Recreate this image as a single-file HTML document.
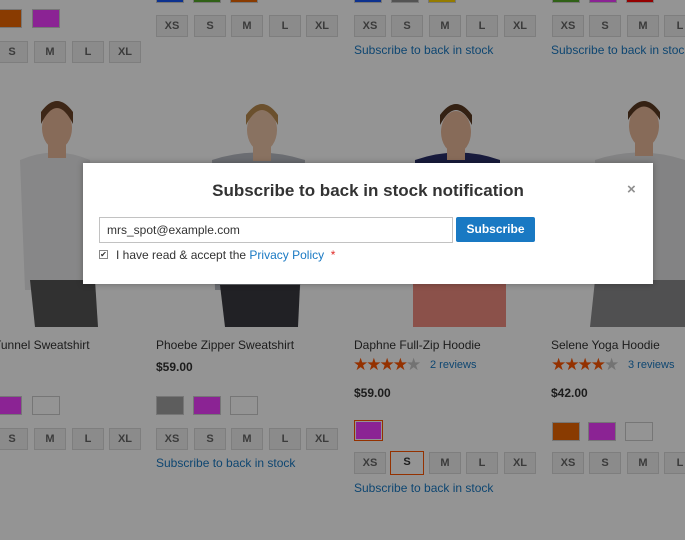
<!DOCTYPE html>
<html><head><meta charset="utf-8"><style>
*{box-sizing:border-box;margin:0;padding:0}
body{width:685px;height:540px;overflow:hidden;position:relative;background:#fff;font-family:"Liberation Sans",sans-serif;color:#333}
.a{position:absolute}
.sw{position:absolute;width:28px;height:19px;border:1px solid #ccc}
.sz{position:absolute;width:32px;height:22px;border:1px solid #dadada;background:#f0f0f0;color:#666;font-size:11px;font-weight:bold;text-align:center;line-height:20px}
.lnk{position:absolute;color:#1979c3;font-size:12px}
.nm{position:absolute;font-size:12px;color:#333}
.pr{position:absolute;font-size:12px;font-weight:bold;color:#333}
.st{position:absolute;font-size:17px;color:#ff5501;letter-spacing:-2px}
.st span{color:#c7c7c7}
.ov{position:absolute;left:0;top:0;width:685px;height:540px;background:rgba(0,0,0,0.42)}
</style></head><body>
<div class="sw" style="left:-6px;top:9px;background:#ec6602"></div>
<div class="sw" style="left:32px;top:9px;background:#ef3dff"></div>
<div class="sz" style="left:-4px;top:41px">S</div>
<div class="sz" style="left:34px;top:41px">M</div>
<div class="sz" style="left:72px;top:41px">L</div>
<div class="sz" style="left:109px;top:41px">XL</div>
<div class="sw" style="left:156px;top:-16px;background:#1857f7"></div>
<div class="sw" style="left:193px;top:-16px;background:#53a828"></div>
<div class="sw" style="left:230px;top:-16px;background:#ec6602"></div>
<div class="sw" style="left:354px;top:-16px;background:#1857f7"></div>
<div class="sw" style="left:391px;top:-16px;background:#8f8f8f"></div>
<div class="sw" style="left:428px;top:-16px;background:#ffd500"></div>
<div class="sw" style="left:552px;top:-16px;background:#53a828"></div>
<div class="sw" style="left:589px;top:-16px;background:#ef3dff"></div>
<div class="sw" style="left:626px;top:-16px;background:#ff0000"></div>
<div class="sz" style="left:156px;top:15px">XS</div><div class="sz" style="left:194px;top:15px">S</div><div class="sz" style="left:231px;top:15px">M</div><div class="sz" style="left:269px;top:15px">L</div><div class="sz" style="left:306px;top:15px">XL</div>
<div class="sz" style="left:354px;top:15px">XS</div><div class="sz" style="left:391px;top:15px">S</div><div class="sz" style="left:429px;top:15px">M</div><div class="sz" style="left:466px;top:15px">L</div><div class="sz" style="left:504px;top:15px">XL</div>
<div class="sz" style="left:552px;top:15px">XS</div><div class="sz" style="left:589px;top:15px">S</div><div class="sz" style="left:627px;top:15px">M</div><div class="sz" style="left:664px;top:15px">L</div>
<div class="lnk" style="left:354px;top:43px">Subscribe to back in stock</div>
<div class="lnk" style="left:551px;top:43px;white-space:nowrap">Subscribe to back in stock</div>

<svg class="a" style="left:0;top:90px" width="685" height="240">
<g>
<path d="M20 70 Q55 55 90 70 L95 200 L25 200 Z" fill="#e8e8ea"/><path d="M30 190 L95 190 L98 237 L35 237 Z" fill="#555"/>
<rect x="48" y="52" width="18" height="16" fill="#e8b89a"/>
<ellipse cx="57" cy="38" rx="15" ry="21" fill="#e8b89a"/><path d="M41 34 Q57 2 73 34 L73 22 Q57 0 41 22Z" fill="#6b4428"/>
</g>
<g>
<path d="M212 70 Q258 55 305 70 L300 200 L215 200 Z" fill="#b8bcc4"/><path d="M220 195 L300 195 L298 237 L225 237 Z" fill="#3a3a40"/>
<rect x="253" y="55" width="18" height="16" fill="#edc5a8"/>
<ellipse cx="262" cy="40" rx="15" ry="21" fill="#edc5a8"/><path d="M246 35 Q262 5 278 35 L278 25 Q262 3 246 25Z" fill="#b88a4e"/>
</g>
<g>
<path d="M415 70 Q458 55 500 70 L500 195 L415 195 Z" fill="#2a2f6a"/><path d="M413 190 L506 190 L506 237 L413 237 Z" fill="#f08c80"/>
<rect x="447" y="56" width="18" height="14" fill="#e8b89a"/>
<ellipse cx="456" cy="42" rx="15" ry="21" fill="#e8b89a"/><path d="M440 35 Q456 5 472 35 L472 25 Q456 3 440 25Z" fill="#5a3a22"/>
</g>
<g>
<path d="M595 70 Q640 55 685 70 L685 200 L600 200 Z" fill="#e2e2e4"/><path d="M595 190 L685 190 L685 237 L590 237 Z" fill="#8a8a8c"/>
<rect x="635" y="50" width="18" height="16" fill="#e8b89a"/>
<ellipse cx="644" cy="36" rx="15" ry="21" fill="#e8b89a"/><path d="M628 30 Q644 3 660 30 L660 22 Q644 0 628 22Z" fill="#5a3a22"/>
</g>
</svg>

<div class="nm" style="left:-6px;top:338px">Tunnel Sweatshirt</div>
<div class="sw" style="left:-6px;top:396px;background:#ef3dff"></div>
<div class="sw" style="left:32px;top:396px;background:#fff"></div>
<div class="sz" style="left:-4px;top:428px">S</div><div class="sz" style="left:34px;top:428px">M</div><div class="sz" style="left:72px;top:428px">L</div><div class="sz" style="left:109px;top:428px">XL</div>

<div class="nm" style="left:156px;top:338px">Phoebe Zipper Sweatshirt</div>
<div class="pr" style="left:156px;top:360px">$59.00</div>
<div class="sw" style="left:156px;top:396px;background:#a0a0a0"></div>
<div class="sw" style="left:193px;top:396px;background:#ef3dff"></div>
<div class="sw" style="left:230px;top:396px;background:#fff"></div>
<div class="sz" style="left:156px;top:428px">XS</div><div class="sz" style="left:194px;top:428px">S</div><div class="sz" style="left:231px;top:428px">M</div><div class="sz" style="left:269px;top:428px">L</div><div class="sz" style="left:306px;top:428px">XL</div>
<div class="lnk" style="left:156px;top:456px">Subscribe to back in stock</div>

<div class="nm" style="left:354px;top:338px">Daphne Full-Zip Hoodie</div>
<div class="st" style="left:353px;top:355px">★★★★<span>★</span></div>
<div class="lnk" style="left:430px;top:359px;font-size:11px">2 reviews</div>
<div class="pr" style="left:354px;top:386px">$59.00</div>
<div class="sw" style="left:354px;top:420px;width:29px;height:21px;background:#ef3dff;border:1px solid #ff5501;box-shadow:inset 0 0 0 1px #fff"></div>
<div class="sz" style="left:354px;top:452px">XS</div><div class="sz" style="left:390px;top:451px;width:34px;height:24px;border:1px solid #ff5501;background:#fff;color:#333">S</div><div class="sz" style="left:429px;top:452px">M</div><div class="sz" style="left:466px;top:452px">L</div><div class="sz" style="left:504px;top:452px">XL</div>
<div class="lnk" style="left:354px;top:481px">Subscribe to back in stock</div>

<div class="nm" style="left:551px;top:338px">Selene Yoga Hoodie</div>
<div class="st" style="left:551px;top:355px">★★★★<span>★</span></div>
<div class="lnk" style="left:628px;top:359px;font-size:11px">3 reviews</div>
<div class="pr" style="left:551px;top:386px">$42.00</div>
<div class="sw" style="left:552px;top:422px;background:#ec6602"></div>
<div class="sw" style="left:588px;top:422px;background:#ef3dff"></div>
<div class="sw" style="left:625px;top:422px;background:#fff"></div>
<div class="sz" style="left:552px;top:452px">XS</div><div class="sz" style="left:589px;top:452px">S</div><div class="sz" style="left:627px;top:452px">M</div><div class="sz" style="left:664px;top:452px">L</div>

<div class="ov"></div>

<div class="a" style="left:83px;top:163px;width:570px;height:121px;background:#fff;box-shadow:0 0 6px rgba(0,0,0,.3)">
<div class="a" style="left:0;top:18px;width:100%;text-align:center;font-size:17px;font-weight:bold;color:#333">Subscribe to back in stock notification</div>
<div class="a" style="left:544px;top:18px;font-size:15px;color:#8f8f8f;font-weight:bold">×</div>
<div class="a" style="left:16px;top:54px;width:354px;height:26px;border:1px solid #c2c2c2;font-size:12px;line-height:24px;padding-left:7px;color:#333">mrs_spot@example.com</div>
<div class="a" style="left:373px;top:54px;width:79px;height:25px;background:#1979c3;color:#fff;font-size:12px;font-weight:bold;text-align:center;line-height:25px;border-radius:2px">Subscribe</div>
<div class="a" style="left:16px;top:87px;width:9px;height:9px;border:1px solid #888;font-size:8px;line-height:8px;text-align:center;color:#333">✔</div>
<div class="a" style="left:33px;top:85px;font-size:12px;color:#333">I have read &amp; accept the <span style="color:#1979c3">Privacy Policy</span> &nbsp;<span style="color:#e02b27">*</span></div>
</div>
</body></html>
